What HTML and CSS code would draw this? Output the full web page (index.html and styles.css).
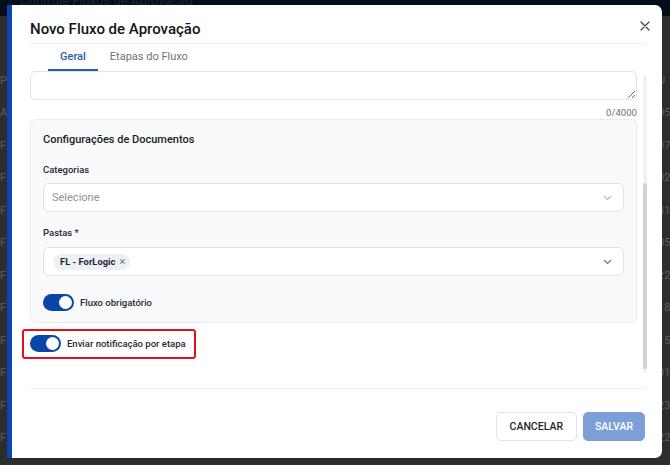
FILE: index.html
```html
<!DOCTYPE html>
<html lang="pt-BR">
<head>
    <meta charset="UTF-8">
    <meta name="viewport" content="width=device-width, initial-scale=1.0">
    <title>Fluxos de Aprovação</title>
    <link rel="stylesheet" href="styles.css">
</head>
<body>
    <!-- Page behind the dialog -->
    <div class="page">
        <div class="topbar"><span class="topbar-title">Controle Fluxos de Aprovação</span></div>
        <ul class="rows">
            <li><span>Pr</span><span>U</span></li>
            <li><span>A</span><span>05</span></li>
            <li><span>F</span><span>07</span></li>
            <li><span>F</span><span>02</span></li>
            <li><span>F</span><span>31</span></li>
            <li><span>F</span><span>05</span></li>
            <li><span>F</span><span>22</span></li>
            <li><span>F</span><span>18</span></li>
            <li><span>F</span><span>15</span></li>
            <li><span>F</span><span>01</span></li>
            <li><span>F</span><span>23</span></li>
            <li><span>F</span><span>22</span></li>
        </ul>
    </div>

    <!-- Dialog -->
    <div class="modal">
        <div class="modal-header">
            <h2>Novo Fluxo de Aprovação</h2>
            <button class="close-btn" aria-label="Fechar">
                <svg width="10" height="10" viewBox="0 0 10 10"><path d="M1 1 L9 9 M9 1 L1 9" stroke="#3b4250" stroke-width="1.2" stroke-linecap="round" fill="none"/></svg>
            </button>
        </div>

        <div class="tabs">
            <a class="tab active" href="#">Geral</a>
            <a class="tab" href="#">Etapas do Fluxo</a>
        </div>

        <div class="modal-body">
            <div class="form">
                <textarea class="textarea"></textarea>
                <div class="counter">0/4000</div>

                <div class="card">
                    <h3>Configurações de Documentos</h3>

                    <label class="card-label">Categorias</label>
                    <div class="select">
                        <span class="placeholder">Selecione</span>
                        <svg class="chevron" width="9" height="6" viewBox="0 0 9 6"><path d="M1 1 L4.5 4.5 L8 1" stroke="#b0b6be" stroke-width="1.1" fill="none"/></svg>
                    </div>

                    <label class="card-label pastas">Pastas *</label>
                    <div class="select">
                        <span class="chip">FL - ForLogic <span class="chip-x">&times;</span></span>
                        <svg class="chevron" width="9" height="6" viewBox="0 0 9 6"><path d="M1 1 L4.5 4.5 L8 1" stroke="#6b7280" stroke-width="1.1" fill="none"/></svg>
                    </div>

                    <div class="toggle-row in-card">
                        <span class="toggle on"></span>
                        <span>Fluxo obrigatório</span>
                    </div>
                </div>

                <div class="toggle-row highlight">
                    <span class="toggle on"></span>
                    <span>Enviar notificação por etapa</span>
                </div>
            </div>
            <!-- thin scrollbar, scrolled to the end of the form -->
            <div class="scrollbar"><div class="scroll-thumb"></div></div>
        </div>

        <div class="modal-footer">
            <button class="btn btn-outline">CANCELAR</button>
            <button class="btn btn-primary" disabled>SALVAR</button>
        </div>
    </div>
</body>
</html>
```

FILE: styles.css
```css
* {
    margin: 0;
    padding: 0;
    box-sizing: border-box;
}

body {
    font-family: 'Roboto', 'Noto Sans', sans-serif;
    background-color: #2d2d2e;
    color: #1f2329;
    width: 670px;
    height: 465px;
    overflow: hidden;
    position: relative;
}

/* Dimmed page behind the dialog */
.page {
    height: 100%;
    overflow: hidden;
}

.topbar {
    height: 16px;
    background-color: #060d1b;
    padding-left: 20px;
}

.topbar-title {
    display: block;
    height: 5px;
    overflow: hidden;
    font-size: 13px;
    line-height: 2px;
    color: #1b2436;
    white-space: nowrap;
}

.rows {
    list-style: none;
    padding-top: 48px;
}

.rows li {
    display: grid;
    grid-template-columns: 1fr 12px;
    height: 32.5px;
    align-items: center;
    font-size: 11px;
    color: #5e5e5e;
    white-space: nowrap;
    overflow: hidden;
}

/* Dialog */
.modal {
    position: absolute;
    left: 7px;
    top: 5px;
    width: 655px;
    height: 453px;
    background-color: #fff;
    border-left: 5px solid #0b45b3;
    border-radius: 0 7px 7px 0;
    padding: 0 15px 0 18px;
    display: flex;
    flex-direction: column;
}

.modal-header {
    display: flex;
    justify-content: space-between;
    align-items: flex-start;
    padding: 14px 0 3px;
    border-bottom: 1px solid #eef0f2;
}

.modal-header h2 {
    font-size: 15px;
    line-height: 21px;
    font-weight: 500;
    color: #111418;
}

.close-btn {
    background: none;
    border: none;
    width: 14px;
    height: 14px;
    margin: 0 -5px 0 0;
    display: flex;
    align-items: center;
    justify-content: center;
    cursor: pointer;
}

.tabs {
    display: flex;
    margin-left: 18px;
}

.tab {
    padding: 6px 12px 5px;
    font-size: 11px;
    line-height: 14px;
    color: #6b7280;
    text-decoration: none;
    border-bottom: 2px solid transparent;
}

.tab.active {
    color: #2b5ca6;
    font-weight: 500;
    border-bottom-color: #2b5ca6;
}

/* Form area with its thin scrollbar */
.modal-body {
    height: 306px;
    flex: none;
    display: flex;
    margin-left: -10px;
    overflow: hidden;
}

.form {
    flex: 1;
    padding: 0 6px 18px 10px;
}

.scrollbar {
    width: 4px;
    margin: 4px 0;
    background-color: #f0f2f5;
    border-radius: 2px;
}

.scroll-thumb {
    margin-top: 108px;
    height: 186px;
    background-color: #cdd3db;
    border-radius: 2px;
}

label {
    display: block;
    font-size: 9.5px;
    line-height: 14px;
    font-weight: 500;
    color: #1f2937;
}

.select {
    height: 29px;
    background-color: #fff;
    border: 1px solid #dfe3e8;
    border-radius: 5px;
    display: flex;
    align-items: center;
    padding: 0 11px 0 8px;
}

.placeholder {
    font-size: 11px;
    color: #8b929c;
    flex: 1;
}

.chevron {
    margin-left: auto;
}

.textarea {
    display: block;
    width: 100%;
    height: 29px;
    border: 1px solid #dfe3e8;
    border-radius: 5px;
    resize: vertical;
    font-family: inherit;
}

.counter {
    text-align: right;
    font-size: 9.6px;
    line-height: 13px;
    color: #6b7280;
    margin-top: 6px;
}

/* Document settings card */
.card {
    background-color: #f9fafb;
    border: 1px solid #eaedf0;
    border-radius: 6px;
    padding: 13px 12px 11px;
}

.card h3 {
    font-size: 11px;
    line-height: 14px;
    font-weight: 500;
    color: #1a1e24;
}

.card-label {
    margin: 16px 0 6px;
}

.card-label.pastas {
    margin: 14px 0 7px;
}

.chip {
    display: inline-flex;
    align-items: center;
    gap: 4px;
    height: 16px;
    padding: 0 5px 0 7px;
    margin-left: 1px;
    background-color: #edf0f4;
    border-radius: 8px;
    font-size: 9.4px;
    font-weight: 700;
    color: #1f2937;
}

.chip-x {
    font-size: 11px;
    font-weight: 400;
    color: #6b7280;
}

/* Toggles */
.toggle-row {
    display: flex;
    align-items: center;
    gap: 6px;
    font-size: 9.5px;
    font-weight: 500;
    color: #1f2937;
}

.toggle-row.in-card {
    margin-top: 18px;
}

.toggle-row.highlight {
    width: fit-content;
    margin: 6px 0 0 -8px;
    padding: 4px 8px 5px 6px;
    border: 2px solid #e3101c;
    border-radius: 3px;
}

.toggle {
    position: relative;
    width: 31px;
    height: 17px;
    border-radius: 9px;
    background-color: #c9ced6;
    flex: none;
}

.toggle.on {
    background-color: #0a45a9;
}

.toggle::after {
    content: "";
    position: absolute;
    top: 2px;
    left: 2px;
    width: 13px;
    height: 13px;
    border-radius: 50%;
    background-color: #fff;
}

.toggle.on::after {
    left: 16px;
}

/* Footer */
.modal-footer {
    margin-top: 11px;
    border-top: 1px solid #eef0f2;
    padding: 23px 2px 0 0;
    display: flex;
    justify-content: flex-end;
    gap: 6px;
}

.btn {
    height: 29px;
    font-family: inherit;
    font-size: 10.5px;
    font-weight: 500;
    border-radius: 5px;
    cursor: pointer;
}

.btn-outline {
    padding: 0 13px;
    background-color: #fff;
    border: 1px solid #dfe3ea;
    color: #1f2329;
}

.btn-primary {
    padding: 0 11px;
    background-color: #7b9fd6;
    border: 1px solid #7b9fd6;
    color: #fff;
}
```
